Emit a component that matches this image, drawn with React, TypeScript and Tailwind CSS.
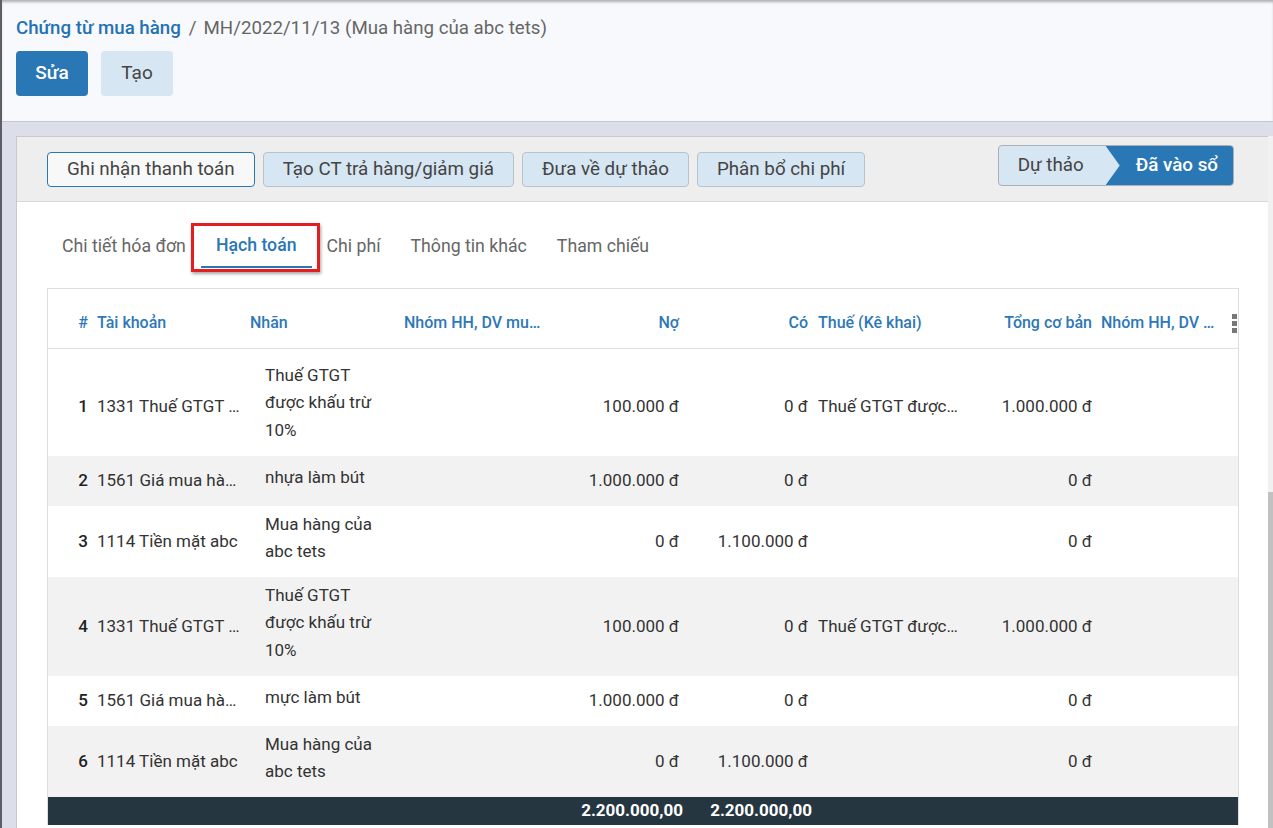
import React from "react";

type Row = {
  n: number;
  acc: string;
  label: string;
  no: string;
  co: string;
  tax: string;
  base: string;
  h: string;
  bg: string;
};

const rows: Row[] = [
  { n: 1, acc: "1331 Thuế GTGT được khấu trừ", label: "Thuế GTGT được khấu trừ 10%", no: "100.000 đ", co: "0 đ", tax: "Thuế GTGT được khấu trừ 10%", base: "1.000.000 đ", h: "h-[107px] pt-[8px]", bg: "bg-white" },
  { n: 2, acc: "1561 Giá mua hàng hóa", label: "nhựa làm bút", no: "1.000.000 đ", co: "0 đ", tax: "", base: "0 đ", h: "h-[50px]", bg: "bg-[#f2f2f2]" },
  { n: 3, acc: "1114 Tiền mặt abc", label: "Mua hàng của abc tets", no: "0 đ", co: "1.100.000 đ", tax: "", base: "0 đ", h: "h-[71px]", bg: "bg-white" },
  { n: 4, acc: "1331 Thuế GTGT được khấu trừ", label: "Thuế GTGT được khấu trừ 10%", no: "100.000 đ", co: "0 đ", tax: "Thuế GTGT được khấu trừ 10%", base: "1.000.000 đ", h: "h-[99px]", bg: "bg-[#f2f2f2]" },
  { n: 5, acc: "1561 Giá mua hàng hóa", label: "mực làm bút", no: "1.000.000 đ", co: "0 đ", tax: "", base: "0 đ", h: "h-[50px]", bg: "bg-white" },
  { n: 6, acc: "1114 Tiền mặt abc", label: "Mua hàng của abc tets", no: "0 đ", co: "1.100.000 đ", tax: "", base: "0 đ", h: "h-[71px]", bg: "bg-[#f2f2f2]" },
];

const tabs = ["Chi tiết hóa đơn", "Hạch toán", "Chi phí", "Thông tin khác", "Tham chiếu"];

function Kebab() {
  return (
    <div className="flex flex-col gap-[2px]">
      <span className="block w-[5px] h-[5px] bg-[#777]" />
      <span className="block w-[5px] h-[5px] bg-[#777]" />
      <span className="block w-[5px] h-[5px] bg-[#777]" />
    </div>
  );
}

export default function App() {
  return (
    <div className="w-[1273px] h-[828px] overflow-hidden flex flex-col border-l-2 border-[#5c5f66] bg-[#dcdfea] font-['Roboto',sans-serif]">
      {/* top bar with breadcrumb + actions */}
      <div className="h-[122px] shrink-0 bg-[#f8f9fc] border-b border-[#c4c7d0] pl-[14px] pt-[16px] shadow-[inset_0_3px_3px_-1px_rgba(0,0,0,0.3)]">
        <div className="flex items-center text-[18.7px] leading-[25px]">
          <span className="text-[#2471b3] font-medium">Chứng từ mua hàng</span>
          <span className="text-[#666] ml-[8px] mr-[7px]">/</span>
          <span className="text-[#666]">MH/2022/11/13 (Mua hàng của abc tets)</span>
        </div>
        <div className="flex gap-[13px] mt-[10px]">
          <button className="w-[72px] h-[45px] rounded-[4px] bg-[#2a77b5] text-white text-[19px] font-medium">Sửa</button>
          <button className="w-[72px] h-[45px] rounded-[4px] bg-[#d6e6f3] text-[#444] text-[19px]">Tạo</button>
        </div>
      </div>

      <div className="flex-1 flex pl-[14px] pt-[14px] min-h-0">
        {/* card */}
        <div className="flex-1 flex flex-col border-t border-l border-[#c9c9c9] bg-white min-h-0">
          <div className="h-[65px] shrink-0 bg-[#eeeeee] border-b border-[#d9d9d9] flex items-start justify-between pl-[30px] pr-[34px]">
            <div className="flex gap-[8px] mt-[15px] text-[18.8px] text-[#444]">
              <button className="h-[35px] px-[19px] rounded-[4px] bg-[#f8f8f8] border border-[#2a77b5]">Ghi nhận thanh toán</button>
              <button className="h-[35px] px-[19px] rounded-[4px] bg-[#d6e6f3] border border-[#b9c3cc]">Tạo CT trả hàng/giảm giá</button>
              <button className="h-[35px] px-[19px] rounded-[4px] bg-[#d6e6f3] border border-[#b9c3cc]">Đưa về dự thảo</button>
              <button className="h-[35px] px-[19px] rounded-[4px] bg-[#d6e6f3] border border-[#b9c3cc]">Phân bổ chi phí</button>
            </div>
            <div className="mt-[8px] h-[41px] flex rounded-[4px] overflow-hidden border border-[#a9b0b7] bg-[#d6e6f3] text-[18.8px]">
              <div className="flex items-center pl-[19px] pr-[22px] text-[#444]">Dự thảo</div>
              <div className="flex items-center pl-[30px] pr-[15px] bg-[#2a77b5] text-white font-medium [clip-path:polygon(0_0,100%_0,100%_100%,0_100%,14px_50%)]">
                Đã vào sổ
              </div>
            </div>
          </div>

          {/* tabs */}
          <div className="flex pl-[30px] pt-[22px] text-[17.7px]">
            {tabs.map((t) =>
              t === "Hạch toán" ? (
                <div key={t} className="relative h-[44px] px-[15px] flex items-center text-[#2a77b5] font-medium border-b-2 border-[#2a77b5]">
                  {t}
                  <div className="absolute -left-[10px] -right-[8px] -top-[1px] -bottom-[6px] border-[3px] border-[#e41e1e] shadow-[1px_2px_3px_rgba(0,0,0,0.35)]" />
                </div>
              ) : (
                <div key={t} className="h-[44px] px-[15px] flex items-center text-[#666]">
                  {t}
                </div>
              )
            )}
          </div>

          {/* accounting table */}
          <div className="ml-[30px] mt-[20px] w-[1192px] border-t border-l border-r border-[#dedede] text-[#333]">
            <div className="h-[60px] pt-[9px] flex items-center border-b border-[#dedede] text-[16px] text-[#2d78b8] font-medium">
              <div className="w-[44px] text-right pr-[4px]">#</div>
              <div className="w-[153px] pl-[5px]">Tài khoản</div>
              <div className="w-[154px] pl-[5px]">Nhãn</div>
              <div className="w-[150px] pl-[5px] pr-[8px] truncate">Nhóm HH, DV mua vào</div>
              <div className="w-[134px] text-right pr-[4px]">Nợ</div>
              <div className="w-[129px] text-right pr-[4px]">Có</div>
              <div className="w-[156px] pl-[6px]">Thuế (Kê khai)</div>
              <div className="w-[128px] text-right pr-[4px]">Tổng cơ bản</div>
              <div className="w-[126px] pl-[5px] pr-[5px] truncate">Nhóm HH, DV mua vào</div>
              <div className="flex-1 flex justify-end pr-[1px]">
                <Kebab />
              </div>
            </div>

            {rows.map((r) => (
              <div key={r.n} className={`${r.h} ${r.bg} flex items-center text-[17px]`}>
                <div className="w-[44px] text-right pr-[4px] font-medium text-[#222]">{r.n}</div>
                <div className="w-[153px] pl-[5px] pr-[4px] truncate">{r.acc}</div>
                <div className="w-[154px] pl-[20px] pb-[7px]">
                  <div className="w-[124px] leading-[27.5px]">{r.label}</div>
                </div>
                <div className="w-[150px]" />
                <div className="w-[134px] text-right pr-[4px]">{r.no}</div>
                <div className="w-[129px] text-right pr-[4px]">{r.co}</div>
                <div className="w-[156px] pl-[6px] pr-[6px] truncate">{r.tax}</div>
                <div className="w-[128px] text-right pr-[4px]">{r.base}</div>
                <div className="flex-1" />
              </div>
            ))}

            <div className="h-[28px] flex items-center bg-[#263641] text-white font-bold text-[17px]">
              <div className="w-[501px]" />
              <div className="w-[134px] text-right">2.200.000,00</div>
              <div className="w-[129px] text-right">2.200.000,00</div>
              <div className="flex-1" />
            </div>
          </div>
        </div>

        {/* page scrollbar */}
        <div className="w-[5px] bg-[#f1f1f1] flex flex-col">
          <div className="mt-[356px] flex-1 bg-[#c1c1c1]" />
        </div>
      </div>
    </div>
  );
}
